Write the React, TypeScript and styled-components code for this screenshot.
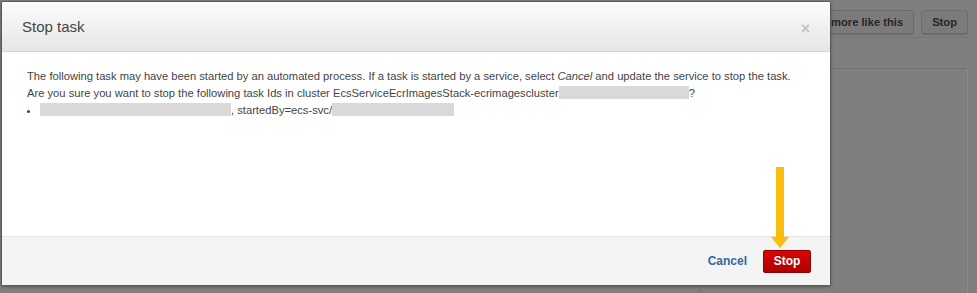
import styled, { createGlobalStyle } from "styled-components";

const GlobalStyle = createGlobalStyle`
  html, body {
    margin: 0;
    padding: 0;
    background: #7f7f7f;
    font-family: "Liberation Sans", Arial, sans-serif;
  }
`;

const Page = styled.div`
  position: relative;
  width: 977px;
  height: 293px;
  overflow: hidden;
  background: #7f7f7f;
`;

// dimmed console page behind the dialog
const Backdrop = styled.div`
  display: flex;
  flex-direction: column;
  height: 100%;
  width: 977px;
  padding-right: 9px;
  box-sizing: border-box;
`;

const Toolbar = styled.div`
  display: flex;
  justify-content: flex-end;
  gap: 7px;
  padding: 10px 0 3px;
  border-bottom: 1px solid #747474;
`;

const GhostButton = styled.div`
  height: 24px;
  box-sizing: border-box;
  padding: 0 10px;
  display: flex;
  align-items: center;
  background: #7b7b7b;
  border: 1px solid #6c6c6c;
  border-radius: 3px;
  box-shadow: 0 1px 1px rgba(0, 0, 0, 0.15);
  color: #262626;
  font-weight: bold;
  font-size: 11.2px;
`;

const GhostPanel = styled.div`
  margin-top: 30px;
  margin-left: 700px;
  flex: 1;
  border: 1px solid #717171;
  border-right-color: #8a8a8a;
  border-bottom: none;
`;

const Modal = styled.div`
  position: absolute;
  left: 1px;
  top: 1px;
  width: 830px;
  height: 285px;
  display: flex;
  flex-direction: column;
  background: #fff;
  border: 1px solid #5a5a5a;
  border-radius: 2px;
  box-sizing: border-box;
  box-shadow: 0 1px 3px rgba(0, 0, 0, 0.35);
  overflow: hidden;
`;

const Header = styled.div`
  height: 50px;
  flex: none;
  display: flex;
  align-items: center;
  justify-content: space-between;
  padding: 0 20px;
  background: linear-gradient(#fcfcfc, #e6e6e6);
  border-bottom: 1px solid #d6d6d6;
  box-sizing: border-box;
`;

const Title = styled.h1`
  margin: 0;
  font-size: 15px;
  font-weight: normal;
  color: #444;
`;

const Close = styled.span`
  font-size: 16px;
  font-weight: bold;
  color: #c4c4c4;
  margin-top: 4px;
`;

const Body = styled.div`
  flex: 1;
  padding: 16px 25px;
  font-size: 11.2px;
  line-height: 17px;
  color: #444;
`;

const Para = styled.p`
  margin: 0;
`;

const TaskList = styled.ul`
  margin: 0;
  padding-left: 13px;
`;

const Redacted = styled.span<{ $w: number }>`
  display: inline-block;
  width: ${({ $w }) => $w}px;
  height: 13px;
  vertical-align: -2px;
  background: #d9d9d9;
`;

const Footer = styled.div`
  height: 49px;
  flex: none;
  display: flex;
  align-items: center;
  justify-content: flex-end;
  gap: 16px;
  padding-right: 19px;
  background: #f4f4f4;
  border-top: 1px solid #e4e4e4;
  box-sizing: border-box;
`;

const CancelLink = styled.a`
  font-size: 12px;
  font-weight: bold;
  color: #2f6aa6;
  text-decoration: none;
`;

const StopButton = styled.button`
  width: 48px;
  height: 23px;
  padding: 0;
  border: 1px solid #8e0000;
  border-radius: 2px;
  background: linear-gradient(#dc0606, #ad0000);
  color: #fff;
  font-family: "Liberation Sans", Arial, sans-serif;
  font-size: 12px;
  font-weight: bold;
  text-shadow: 0 -1px 0 rgba(0, 0, 0, 0.3);
`;

const Arrow = styled.svg`
  position: absolute;
  left: 771px;
  top: 167px;
`;

export default function App() {
  return (
    <Page>
      <GlobalStyle />
      <Backdrop>
        <Toolbar>
          <GhostButton>more like this</GhostButton>
          <GhostButton>Stop</GhostButton>
        </Toolbar>
        <GhostPanel />
      </Backdrop>
      <Modal>
        <Header>
          <Title>Stop task</Title>
          <Close>×</Close>
        </Header>
        <Body>
          <Para>
            The following task may have been started by an automated process. If a
            task is started by a service, select <i>Cancel</i> and update the
            service to stop the task.
          </Para>
          <Para>
            Are you sure you want to stop the following task Ids in cluster
            EcsServiceEcrImagesStack-ecrimagescluster
            <Redacted $w={130} />?
          </Para>
          <TaskList>
            <li>
              <Redacted $w={191} />, startedBy=ecs-svc/
              <Redacted $w={122} />
            </li>
          </TaskList>
        </Body>
        <Footer>
          <CancelLink href="#">Cancel</CancelLink>
          <StopButton>Stop</StopButton>
        </Footer>
      </Modal>
      <Arrow width="18" height="82" viewBox="0 0 18 82">
        <rect x="5" y="0" width="8" height="72" fill="#fbbd0b" />
        <polygon points="0,70 18,70 9,81" fill="#fbbd0b" />
      </Arrow>
    </Page>
  );
}
